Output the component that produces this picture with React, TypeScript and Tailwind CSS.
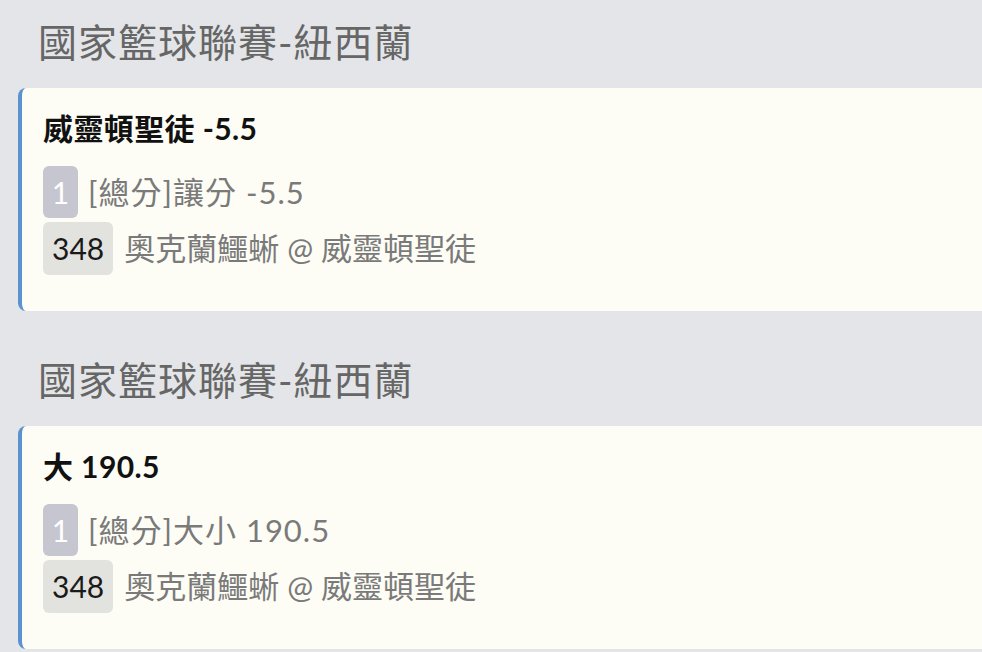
const FONT = { fontFamily: 'Lato, "Noto Sans CJK TC", sans-serif' };

const bets = [
  { title: "威靈頓聖徒 -5.5", market: "[總分]讓分 -5.5" },
  { title: "大 190.5", market: "[總分]大小 190.5" },
];

export default function App() {
  return (
    <div className="min-h-[652px] w-[982px] overflow-hidden bg-[#e4e5e8]" style={FONT}>
      {bets.map((b, i) => (
        <BetSection key={i} title={b.title} market={b.market} />
      ))}
    </div>
  );
}

function BetSection({ title, market }: { title: string; market: string }) {
  return (
    <div className="pb-[27px]">
      {/* league header */}
      <div className="pl-[38px] pt-[19px] h-[88px] text-[39px] leading-[46px] tracking-[1px] text-[#666]">
        國家籃球聯賽-紐西蘭
      </div>

      {/* bet card */}
      <div className="ml-[18px] rounded-l-[8px] border-l-[4px] border-[#5a93cf] bg-[#fdfdf5] pl-[21px] pt-[20px] pb-[36px]">
        <div className="text-[30px] leading-[40px] font-bold tracking-[0.4px] text-[#111]">{title}</div>
        <div className="mt-[18px] flex items-center gap-[10px] h-[52px]">
          <span className="flex h-[52px] w-[35px] items-center justify-center rounded-[6px] bg-[#c5c6cf] text-[30px] text-white">
            1
          </span>
          <span className="text-[31px] tracking-[1px] text-[#7a7a7a]">{market}</span>
        </div>
        <div className="mt-[4px] flex items-center gap-[11px] h-[53px]">
          <span className="flex h-[53px] items-center rounded-[6px] bg-[#e2e2de] px-[9px] text-[30px] text-[#1a1a1a]">
            348
          </span>
          <span className="text-[31px] text-[#7a7a7a]">奧克蘭鱷蜥 @ 威靈頓聖徒</span>
        </div>
      </div>
    </div>
  );
}
